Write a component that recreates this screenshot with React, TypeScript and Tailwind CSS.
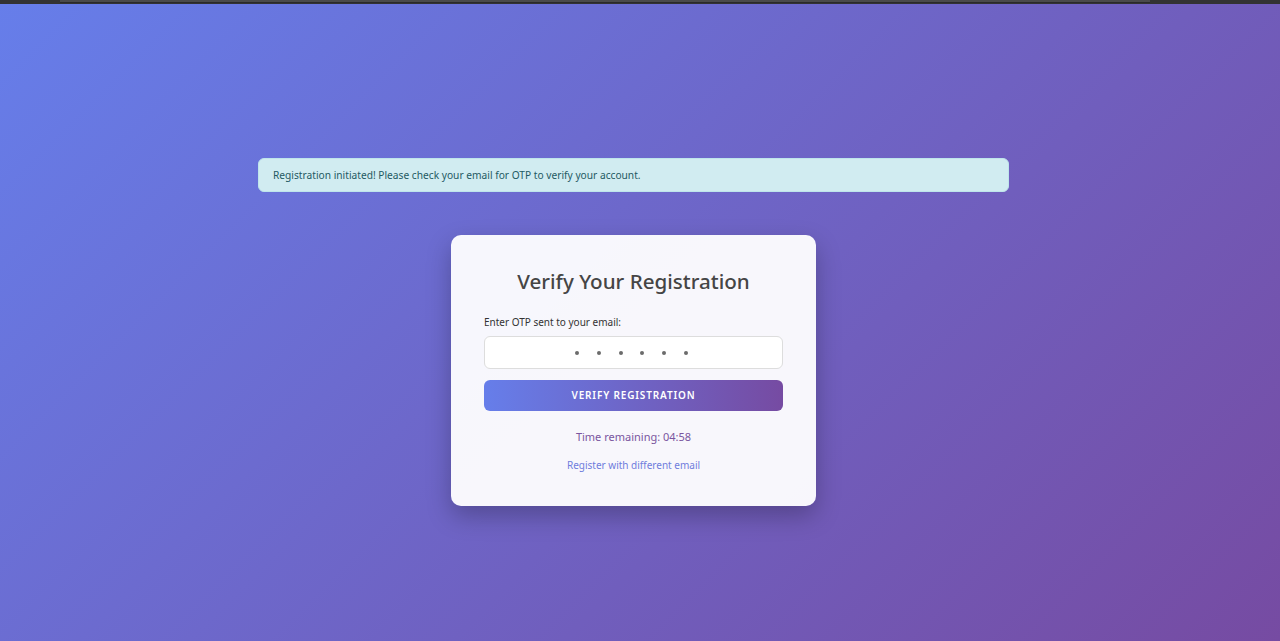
import React from "react";

export default function App() {
  return (
    <div
      className="w-[1280px] h-[641px] overflow-hidden flex flex-col bg-[linear-gradient(135deg,#667eea_0%,#764ba2_100%)]"
      style={{ fontFamily: '"Noto Sans", "Open Sans", sans-serif' }}
    >
      <div className="h-[4px] bg-[#333333] flex">
        <div className="ml-[60px] w-[1090px] h-[3px] bg-[#4a4a4a] border-b border-[#2a2a2a]" />
      </div>
      <div className="flex-1 flex flex-col items-center pt-[154px] pr-[13px]">
        <div className="w-[751px] h-[34px] rounded-[6px] bg-[#d1ecf1] border border-[#bee5eb] flex items-center pt-[2px] px-[14px] text-[10.2px] text-[#1f5a63]">
          Registration initiated! Please check your email for OTP to verify your account.
        </div>
        <div className="mt-[43px] w-[365px] rounded-[10px] bg-white/95 shadow-[0_10px_25px_rgba(0,0,0,0.25)] px-[33px] pt-[31px] pb-[33px] flex flex-col">
          <h2 className="text-center text-[20.6px] leading-[30px] font-medium text-[#454545]">
            Verify Your Registration
          </h2>
          <label className="mt-[18px] text-[10px] leading-[16px] text-[#333333]">
            Enter OTP sent to your email:
          </label>
          <div className="mt-[6px] h-[33px] rounded-[6px] bg-white border border-[#dddddd] flex items-center justify-center gap-[17.8px] pr-[4px]">
            {[0, 1, 2, 3, 4, 5].map((i) => (
              <span key={i} className="w-[4px] h-[4px] rounded-full bg-[#6b6b6b]" />
            ))}
          </div>
          <button className="mt-[11px] h-[31px] rounded-[6px] bg-[linear-gradient(90deg,#667eea,#764ba2)] text-white text-[10px] font-semibold tracking-[0.85px]">
            VERIFY REGISTRATION
          </button>
          <div className="mt-[17px] text-center text-[11px] leading-[18px] text-[#7a559f]">
            Time remaining: 04:58
          </div>
          <div className="mt-[11px] text-center text-[10px] leading-[16px] text-[#6f7ddc]">
            Register with different email
          </div>
        </div>
      </div>
    </div>
  );
}
